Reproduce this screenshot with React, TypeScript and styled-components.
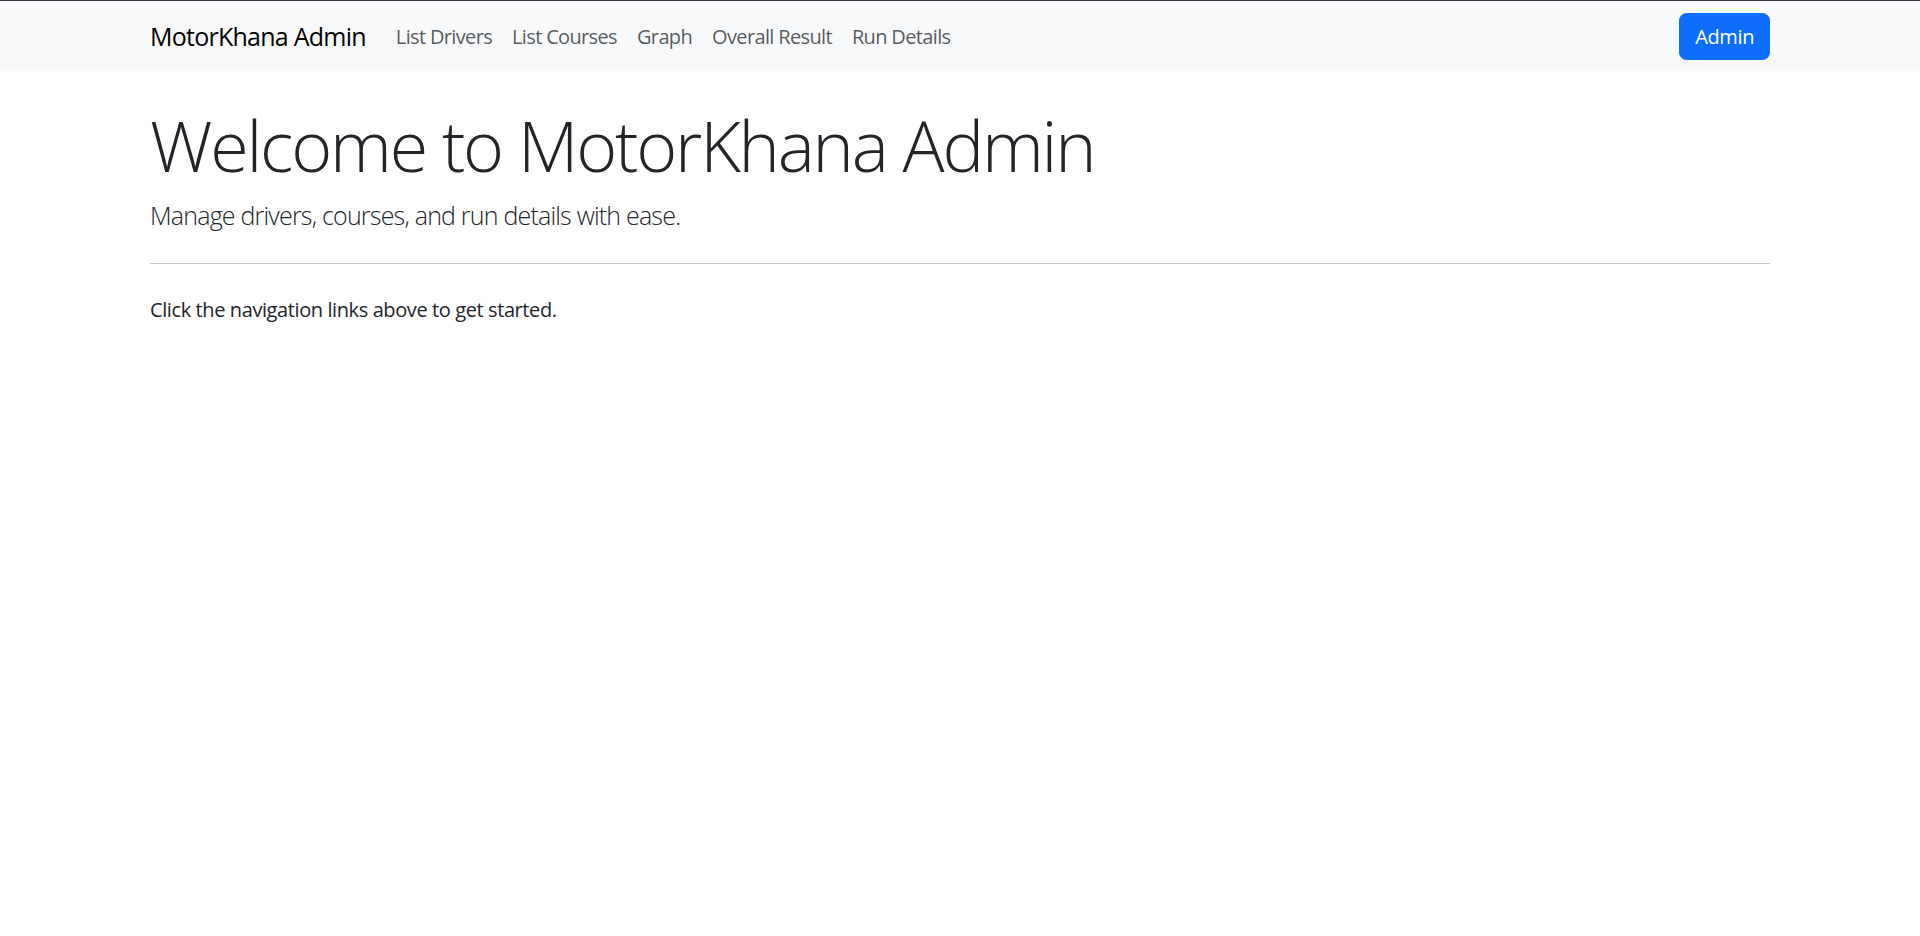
import React from "react";
import styled, { createGlobalStyle } from "styled-components";

const GlobalStyle = createGlobalStyle`
  *, *::before, *::after { box-sizing: border-box; }
  html, body { margin: 0; padding: 0; }
  body {
    font-family: "Open Sans", "Noto Sans", "Liberation Sans", sans-serif;
    font-size: 20px;
    line-height: 1.5;
    color: #212529;
    background: #fff;
    border-top: 1px solid #32343f;
  }
`;

const Navbar = styled.nav`
  background: #f8f9fa;
  padding: 10px 0;
`;

const Container = styled.div`
  width: 100%;
  max-width: 1650px;
  margin: 0 auto;
  padding: 0 15px;
`;

const NavInner = styled(Container)`
  display: flex;
  align-items: center;
`;

const Brand = styled.a`
  font-size: 25px;
  line-height: 1.5;
  padding: 7.25px 0 5.25px;
  margin-right: 20px;
  color: #000;
  text-decoration: none;
  letter-spacing: -0.75px;
`;

const NavList = styled.ul`
  display: flex;
  list-style: none;
  margin: 0;
  padding: 0;
  flex: 1;
`;

const NavLink = styled.a`
  display: block;
  padding: 11px 10px 9px;
  font-size: 20px;
  line-height: 1.5;
  color: rgba(33, 37, 41, 0.75);
  text-decoration: none;
  letter-spacing: -0.65px;
`;

const Button = styled.button`
  font-family: inherit;
  font-size: 20px;
  line-height: 1.5;
  padding: 8px 15px 7px;
  border: 1.25px solid #0d6efd;
  border-radius: 7.5px;
  background: #0d6efd;
  color: #fff;
  cursor: pointer;
  letter-spacing: -0.4px;
`;

const Main = styled(Container)`
  margin-top: 32px;
`;

const Display = styled.h1`
  font-size: 70px;
  font-weight: 300;
  line-height: 1.2;
  margin: 0 0 10px;
  letter-spacing: -2.2px;
`;

const Lead = styled.p`
  font-size: 25px;
  font-weight: 300;
  line-height: 1.5;
  margin: 0 0 28px;
  letter-spacing: -0.8px;
`;

const Rule = styled.hr`
  margin: 28px 0 31px;
  border: 0;
  border-top: 1.25px solid #212529;
  opacity: 0.25;
`;

const Text = styled.p`
  margin: 0 0 20px;
  font-size: 20px;
  letter-spacing: -0.4px;
`;

const links = ["List Drivers", "List Courses", "Graph", "Overall Result", "Run Details"];

export default function App() {
  return (
    <>
      <GlobalStyle />
      <Navbar>
        <NavInner>
          <Brand href="#">MotorKhana Admin</Brand>
          <NavList>
            {links.map((l) => (
              <li key={l}>
                <NavLink href="#">{l}</NavLink>
              </li>
            ))}
          </NavList>
          <Button>Admin</Button>
        </NavInner>
      </Navbar>
      <Main>
        <Display>Welcome to MotorKhana Admin</Display>
        <Lead>Manage drivers, courses, and run details with ease.</Lead>
        <Rule />
        <Text>Click the navigation links above to get started.</Text>
      </Main>
    </>
  );
}
